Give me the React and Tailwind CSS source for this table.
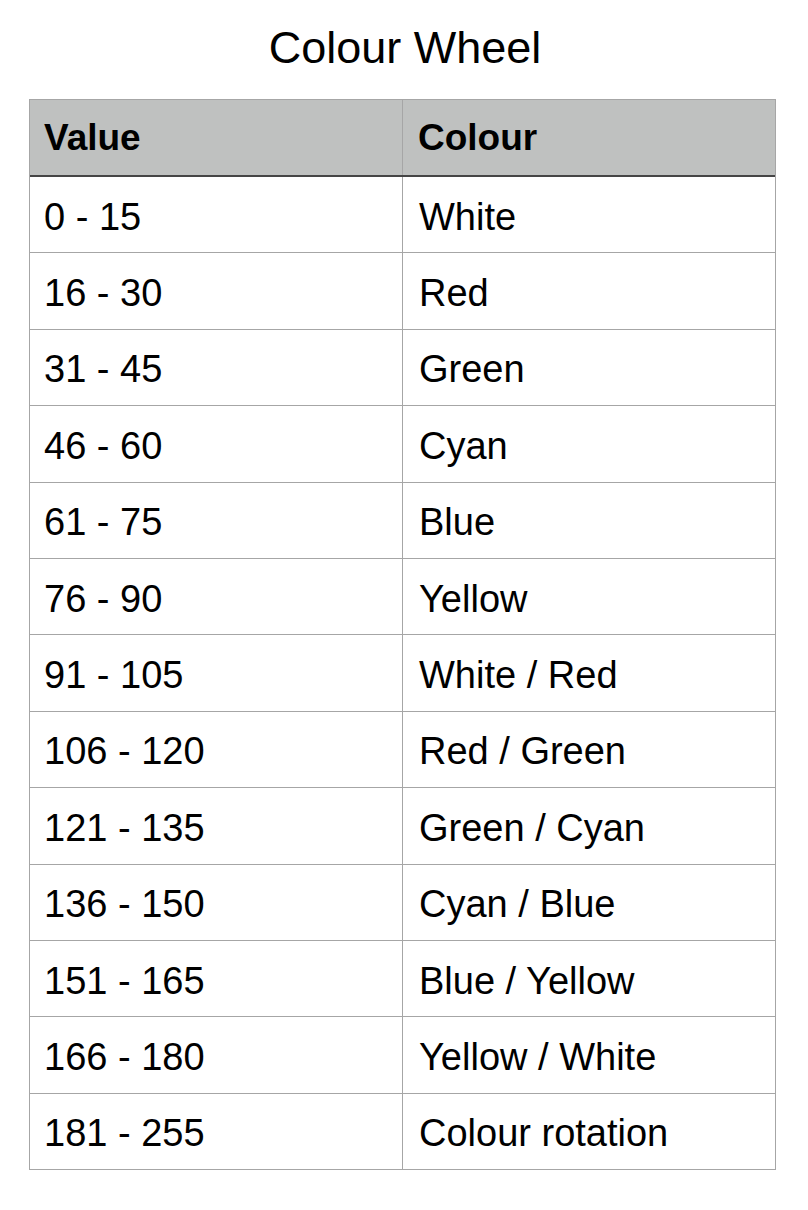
import React from 'react';

const rows = [
  ['0 - 15', 'White'],
  ['16 - 30', 'Red'],
  ['31 - 45', 'Green'],
  ['46 - 60', 'Cyan'],
  ['61 - 75', 'Blue'],
  ['76 - 90', 'Yellow'],
  ['91 - 105', 'White / Red'],
  ['106 - 120', 'Red / Green'],
  ['121 - 135', 'Green / Cyan'],
  ['136 - 150', 'Cyan / Blue'],
  ['151 - 165', 'Blue / Yellow'],
  ['166 - 180', 'Yellow / White'],
  ['181 - 255', 'Colour rotation'],
];

const App = () => {
  return (
    <div className="min-h-[1210px] w-[808px] bg-white text-black font-['Liberation_Sans',Arial,sans-serif]">
      <h1 className="pt-[25px] h-[99px] text-center text-[45px] leading-[45px] pl-[2px]">Colour Wheel</h1>

      <div className="ml-[29px] w-[747px] border-x border-t border-[#a6a6a6]">
        {/* Header */}
        <div className="flex h-[77px] bg-[#bfc1c0] border-b-2 border-[#454545]">
          <div className="w-[373px] border-r border-[#a6a6a6] flex items-center pl-[14px]">
            <span className="text-[37px] leading-[38px] font-bold">Value</span>
          </div>
          <div className="flex-1 flex items-center pl-[15px]">
            <span className="text-[37px] leading-[38px] font-bold">Colour</span>
          </div>
        </div>

        {/* Rows */}
        {rows.map(([value, colour]) => (
          <div key={value} className="flex h-[76.4px] border-b border-[#a6a6a6]">
            <div className="w-[373px] border-r border-[#a6a6a6] flex items-center pl-[14px] pt-[4px]">
              <span className="text-[38px] leading-[38px]">{value}</span>
            </div>
            <div className="flex-1 flex items-center pl-[16px] pt-[4px]">
              <span className="text-[38px] leading-[38px]">{colour}</span>
            </div>
          </div>
        ))}
      </div>
    </div>
  );
};

export default App;
